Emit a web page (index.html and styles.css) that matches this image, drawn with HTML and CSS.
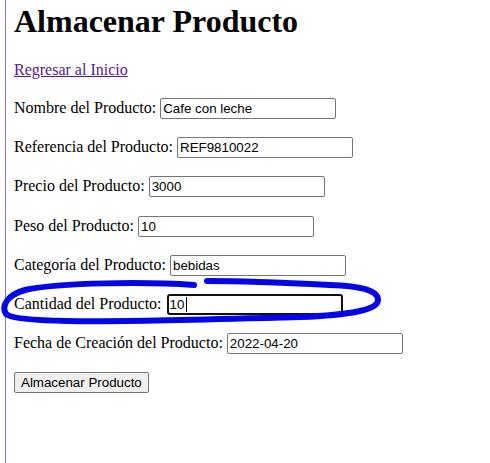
FILE: index.html
```html
<!DOCTYPE html>
<html lang="es">
<head>
<meta charset="utf-8">
<title>Almacenar Producto</title>
<link rel="stylesheet" href="styles.css">
</head>
<body>
<h1 class="title">Almacenar Producto</h1>
<div class="back"><a class="back-link" href="#">Regresar al Inicio</a></div>
<form class="form">
  <div class="row"><label class="lbl">Nombre del Producto:</label> <input class="field" type="text" value="Cafe con leche"></div>
  <div class="row"><label class="lbl">Referencia del Producto:</label> <input class="field" type="text" value="REF9810022"></div>
  <div class="row"><label class="lbl">Precio del Producto:</label> <input class="field" type="text" value="3000"></div>
  <div class="row"><label class="lbl">Peso del Producto:</label> <input class="field" type="text" value="10"></div>
  <div class="row"><label class="lbl">Categoría del Producto:</label> <input class="field" type="text" value="bebidas"></div>
  <div class="row"><label class="lbl">Cantidad del Producto:</label> <span class="focus-wrap"><input class="field field-focus" type="text" value="10"><span class="caret"></span></span></div>
  <div class="row"><label class="lbl">Fecha de Creación del Producto:</label> <input class="field" type="text" value="2022-04-20"></div>
  <div class="row"><button class="btn" type="button">Almacenar Producto</button></div>
</form>
<svg class="scribble" width="490" height="463" viewBox="0 0 490 463" aria-hidden="true">
  <path d="M194,285 C150,282 60,282 25,290 C7,295 1,306 6,314 C18,325 150,321 300,317 C350,315 378,310 378,300 C378,290 360,286 330,285 C290,283 240,281 207,281" fill="none" stroke="#0505e6" stroke-width="6" stroke-linecap="round" stroke-linejoin="round"/>
</svg>
</body>
</html>
```

FILE: styles.css
```css
html {
  margin: 0 0 0 5px;
  border-left: 1px solid #8f72c2;
  min-height: 100vh;
  box-sizing: border-box;
  background: #ffffff;
}

body {
  margin: 3px 8px 8px 8px;
  font-family: "Liberation Serif", "Times New Roman", serif;
  font-size: 16px;
  color: #000000;
}

.title {
  margin: 0 0 21.44px 0;
  font-size: 32px;
  font-weight: bold;
  line-height: normal;
}

.back {
  line-height: normal;
  margin-bottom: 18.6px;
}

.back-link {
  color: #551a8b;
  text-decoration: underline;
}

.form {
  margin: 0;
}

.row {
  height: 21px;
  margin-bottom: 18.2px;
  white-space: nowrap;
}

.field {
  box-sizing: border-box;
  width: 176px;
  height: 21px;
  padding: 1px 2px;
  border: 1px solid #767676;
  border-radius: 2px;
  font-family: "Liberation Sans", Arial, sans-serif;
  font-size: 13.333px;
  color: #000000;
  background: #ffffff;
  margin: 0;
}

.focus-wrap {
  position: relative;
  display: inline-block;
  margin-left: 1px;
}

.field-focus {
  border: 2px solid #111111;
  border-radius: 3px;
  padding: 0 2px 0 1px;
  outline: none;
}

.caret {
  position: absolute;
  left: 19px;
  top: 3px;
  width: 1px;
  height: 15px;
  background: #000000;
}

.btn {
  box-sizing: border-box;
  height: 21px;
  padding: 1px 6px;
  border: 1px solid #767676;
  border-radius: 2px;
  background: #efefef;
  font-family: "Liberation Sans", Arial, sans-serif;
  font-size: 13.333px;
  color: #000000;
  margin: 0;
}

.scribble {
  position: absolute;
  top: 0;
  left: 0;
  pointer-events: none;
}
```
